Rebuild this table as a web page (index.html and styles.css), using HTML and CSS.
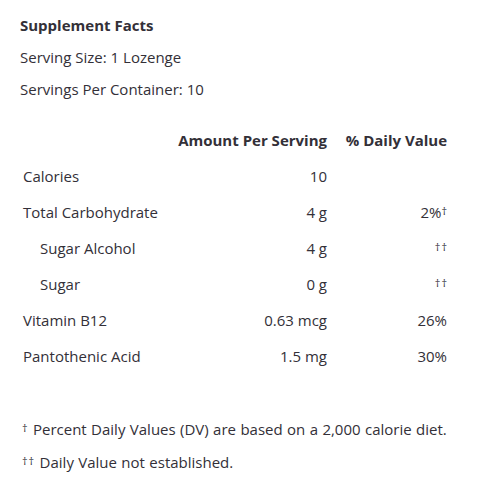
FILE: index.html
```html
<!DOCTYPE html>
<html>
<head>
<meta charset="utf-8">
<link rel="stylesheet" href="styles.css">
</head>
<body>
<div class="facts">
  <div class="title">Supplement Facts</div>
  <div class="line">Serving Size: 1 Lozenge</div>
  <div class="line">Servings Per Container: 10</div>
  <div class="table">
    <div class="row head">
      <div class="c1"></div>
      <div class="c2">Amount Per Serving</div>
      <div class="c3">% Daily Value</div>
    </div>
    <div class="row">
      <div class="c1">Calories</div>
      <div class="c2">10</div>
      <div class="c3"></div>
    </div>
    <div class="row">
      <div class="c1">Total Carbohydrate</div>
      <div class="c2">4 g</div>
      <div class="c3">2%<span class="dag end">†</span></div>
    </div>
    <div class="row">
      <div class="c1 sub">Sugar Alcohol</div>
      <div class="c2">4 g</div>
      <div class="c3"><span class="dag end">††</span></div>
    </div>
    <div class="row">
      <div class="c1 sub">Sugar</div>
      <div class="c2">0 g</div>
      <div class="c3"><span class="dag end">††</span></div>
    </div>
    <div class="row">
      <div class="c1">Vitamin B12</div>
      <div class="c2">0.63 mcg</div>
      <div class="c3">26%</div>
    </div>
    <div class="row">
      <div class="c1">Pantothenic Acid</div>
      <div class="c2">1.5 mg</div>
      <div class="c3">30%</div>
    </div>
  </div>
  <div class="note first"><span class="dag">†</span> Percent Daily Values (DV) are based on a 2,000 calorie diet.</div>
  <div class="note"><span class="dag">††</span> Daily Value not established.</div>
</div>
</body>
</html>
```
FILE: styles.css
```css
html, body {
  margin: 0;
  padding: 0;
  background: #fff;
}
body {
  font-family: "Open Sans", "Noto Sans", sans-serif;
  font-size: 15px;
  color: #333038;
}
.facts {
  padding: 9px 0 0 20px;
  width: 430px;
}
.title {
  font-weight: 700;
  font-size: 15px;
  line-height: 32px;
}
.line {
  line-height: 32px;
}
.table {
  margin-top: 17px;
}
.row {
  display: grid;
  grid-template-columns: 1fr 160px 120px;
  height: 36px;
  align-items: center;
}
.row.head {
  font-weight: 700;
}
.c1 {
  padding-left: 3px;
}
.c1.sub {
  padding-left: 20px;
}
.c2, .c3 {
  text-align: right;
  padding-right: 3px;
  white-space: nowrap;
}
.dag {
  font-size: 11px;
  vertical-align: 3px;
  letter-spacing: 1px;
}
.dag.end {
  margin-right: -1px;
}
.note {
  line-height: 32px;
  padding-left: 2px;
  word-spacing: 0.5px;
}
.note.first {
  margin-top: 38px;
}
```
